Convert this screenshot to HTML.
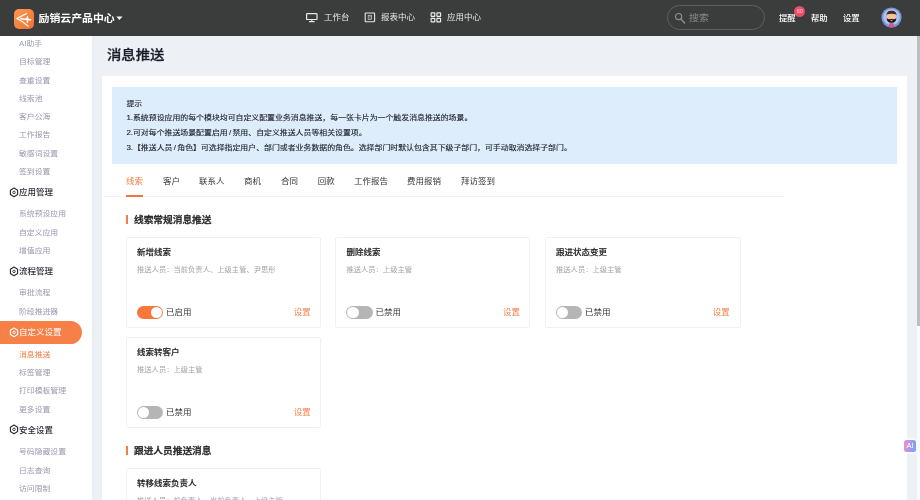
<!DOCTYPE html>
<html lang="zh-CN">
<head>
<meta charset="utf-8">
<title>消息推送</title>
<style>
*{box-sizing:border-box;margin:0;padding:0}
html,body{width:920px;height:500px;overflow:hidden;background:#edf0f5;
  font-family:"Liberation Sans","Noto Sans CJK SC",sans-serif;color:#333;}
body{position:relative;will-change:transform}
.abs{position:absolute;white-space:nowrap}
.abs,.si,.sg,.ct,.cs,.tt,.st,#search span{transform:scaleY(.93)}
/* header */
#hd{position:absolute;left:0;top:0;width:920px;height:35.6px;background:#3b3c3c}
#logo{position:absolute;left:14px;top:9.1px;width:20px;height:20.4px;border-radius:5px;
  background:linear-gradient(135deg,#fb9a52,#f26f33)}
#brand{left:38.5px;top:9px;font-size:10.9px;line-height:18px;font-weight:700;color:#fff;letter-spacing:0}
.nav{color:#e9e9e9;font-size:8.5px;line-height:12px;top:11px}
.hicon{position:absolute}
#search{position:absolute;left:667px;top:5px;width:98px;height:25px;border:1px solid #606060;border-radius:13px}
#search span{position:absolute;left:21px;top:5px;font-size:10px;line-height:14px;color:#8a8a8a}
.hr{color:#fff;font-size:8.4px;line-height:12px;top:11.5px;font-weight:500}
#badge{position:absolute;left:794.3px;top:5.6px;width:11px;height:11px;border-radius:6px;background:#ee4d69;
  color:#fcd3da;font-size:5.5px;line-height:11px;text-align:center}
#avatar{position:absolute;left:881px;top:7px}
/* sidebar */
#sb{position:absolute;left:0;top:36px;width:92px;height:464px;background:#fff;box-shadow:1px 0 4px rgba(0,0,40,.03)}
.si{position:absolute;left:19px;font-size:7.85px;line-height:12px;color:#9899b0;white-space:nowrap}
.sg{position:absolute;left:19px;font-size:8.5px;line-height:14px;color:#2b2b3a;font-weight:500;white-space:nowrap}
.gi{position:absolute;left:9px}
#pill{position:absolute;left:0;top:284.5px;width:82px;height:23.6px;border-radius:0 12px 12px 0;background:#f78049}
/* main */
#title{left:107px;top:44.2px;transform:scaleY(.89);font-size:14.35px;line-height:22px;font-weight:500;color:#1c1c2b;-webkit-text-stroke:0.3px #1c1c2b}
#card{position:absolute;left:102px;top:75.6px;width:805px;height:430px;background:#fff}
#tip{position:absolute;left:112px;top:86.5px;width:785.2px;height:77px;background:#deedfb}
.tl{left:126.4px;font-size:7.9px;line-height:12px;color:#1a1a28;-webkit-text-stroke:0.12px #1a1a28}
.sl{font-style:normal;padding:0 1.3px}
.tab{font-size:8.5px;line-height:12px;color:#333;top:174.6px}
#tabline{position:absolute;left:104px;top:196.3px;width:680px;height:1.2px;background:#f2f3f6}
#tabact{position:absolute;left:126px;top:194.8px;width:17px;height:2.1px;background:#ee7440}
.sec{font-size:9.7px;line-height:14px;font-weight:500;color:#222;left:134px;-webkit-text-stroke:0.32px #222}
.bar{position:absolute;left:126.2px;width:2.1px;height:9.5px;background:#f57c48}
.cd{position:absolute;width:195px;height:90.6px;border:1px solid #f1f1f4;border-radius:2px;background:#fff}
.ct{position:absolute;left:10px;top:8.1px;font-size:8.5px;line-height:12px;font-weight:500;color:#222;white-space:nowrap;-webkit-text-stroke:0.15px #222}
.cs{position:absolute;left:10px;top:26.6px;font-size:7.3px;line-height:10px;color:#a2a2a9;white-space:nowrap}
.c3 .st{right:10.3px}
.tg{position:absolute;left:10px;top:68.1px;width:26.2px;height:13.4px;border-radius:7px;background:#b5b5b5}
.tg i{position:absolute;left:1.1px;top:1.1px;width:11.2px;height:11.2px;border-radius:50%;background:#fff}
.tg.on{background:#f8773d}
.tg.on i{left:13.9px}
.tt{position:absolute;left:39px;top:68px;font-size:8.5px;line-height:12px;color:#333;white-space:nowrap}
.st{position:absolute;right:9.3px;top:68px;font-size:8.5px;line-height:12px;color:#f7824c;white-space:nowrap}
#sbar{position:absolute;left:917.1px;top:35.6px;width:3.4px;height:290.4px;background:#bebebe}
#strk{position:absolute;left:917.1px;top:326px;width:3.4px;height:174px;background:#fafafa}
#ai{position:absolute;left:904px;top:440px;width:12px;height:12px;border-radius:2.5px;
  background:linear-gradient(100deg,#f48fc8,#8f9cf5 70%,#6fa8f5);color:#fff;font-size:7.5px;line-height:12px;text-align:center;font-weight:400;box-shadow:0 0 3px 1.5px rgba(255,255,255,.85)}
</style>
</head>
<body>
<!-- main area -->
<div id="title" class="abs">消息推送</div>
<div id="card"></div>
<div id="tip"></div>
<div class="abs tl" style="top:97.8px">提示</div>
<div class="abs tl" style="top:112.4px">1.系统预设应用的每个模块均可自定义配置业务消息推送，每一张卡片为一个触发消息推送的场景。</div>
<div class="abs tl" style="top:127.2px">2.可对每个推送场景配置启用<i class="sl">/</i>禁用、自定义推送人员等相关设置项。</div>
<div class="abs tl" style="top:141.9px">3.【推送人员<i class="sl">/</i>角色】可选择指定用户、部门或者业务数据的角色。选择部门时默认包含其下级子部门，可手动取消选择子部门。</div>

<div class="abs tab" style="left:126px;color:#f8773d">线索</div>
<div class="abs tab" style="left:163px">客户</div>
<div class="abs tab" style="left:199px">联系人</div>
<div class="abs tab" style="left:244px">商机</div>
<div class="abs tab" style="left:281px">合同</div>
<div class="abs tab" style="left:317.8px">回款</div>
<div class="abs tab" style="left:354px">工作报告</div>
<div class="abs tab" style="left:407px">费用报销</div>
<div class="abs tab" style="left:461px">拜访签到</div>
<div id="tabline"></div>
<div id="tabact"></div>

<div class="bar" style="top:214.5px"></div>
<div class="abs sec" style="top:213.2px">线索常规消息推送</div>

<div class="cd" style="left:126px;top:237px">
  <div class="ct">新增线索</div>
  <div class="cs">推送人员：当前负责人、上级主管、尹思彤</div>
  <div class="tg on"><i></i></div><div class="tt">已启用</div><div class="st">设置</div>
</div>
<div class="cd" style="left:335.4px;top:237px">
  <div class="ct">删除线索</div>
  <div class="cs">推送人员：上级主管</div>
  <div class="tg"><i></i></div><div class="tt">已禁用</div><div class="st">设置</div>
</div>
<div class="cd c3" style="left:545px;top:237px;width:196px">
  <div class="ct">跟进状态变更</div>
  <div class="cs">推送人员：上级主管</div>
  <div class="tg"><i></i></div><div class="tt">已禁用</div><div class="st">设置</div>
</div>
<div class="cd" style="left:126px;top:337px">
  <div class="ct">线索转客户</div>
  <div class="cs">推送人员：上级主管</div>
  <div class="tg"><i></i></div><div class="tt">已禁用</div><div class="st">设置</div>
</div>

<div class="bar" style="top:445.8px"></div>
<div class="abs sec" style="top:444.4px">跟进人员推送消息</div>
<div class="cd" style="left:126px;top:468px">
  <div class="ct">转移线索负责人</div>
  <div class="cs">推送人员：前负责人、当前负责人、上级主管</div>
</div>

<div id="sbar"></div><div id="strk"></div>
<div id="ai">AI</div>

<!-- sidebar -->
<div id="sb">
  <div class="si" style="top:2.2px">AI助手</div>
  <div class="si" style="top:20.45px">目标管理</div>
  <div class="si" style="top:38.7px">查重设置</div>
  <div class="si" style="top:56.95px">线索池</div>
  <div class="si" style="top:75.2px">客户公海</div>
  <div class="si" style="top:93.45px">工作报告</div>
  <div class="si" style="top:111.7px">敏感词设置</div>
  <div class="si" style="top:129.95px">签到设置</div>
  <svg class="gi" style="top:150.7px" width="10" height="11" viewBox="0 0 10 11"><path d="M5 1.100 L8.600 3.200 V7.600 L5 9.700 L1.400 7.600 V3.200 Z" fill="none" stroke="#2b2b3a" stroke-width="1.150" stroke-linejoin="round"/><circle cx="5" cy="5.400" r="1.250" fill="none" stroke="#2b2b3a" stroke-width="0.900"/></svg>
  <div class="sg" style="top:149.1px">应用管理</div>
  <div class="si" style="top:172.2px">系统预设应用</div>
  <div class="si" style="top:190.6px">自定义应用</div>
  <div class="si" style="top:208.8px">增值应用</div>
  <svg class="gi" style="top:230.0px" width="10" height="11" viewBox="0 0 10 11"><path d="M5 1.100 L8.600 3.200 V7.600 L5 9.700 L1.400 7.600 V3.200 Z" fill="none" stroke="#2b2b3a" stroke-width="1.150" stroke-linejoin="round"/><circle cx="5" cy="5.400" r="1.250" fill="none" stroke="#2b2b3a" stroke-width="0.900"/></svg>
  <div class="sg" style="top:228.4px">流程管理</div>
  <div class="si" style="top:251.4px">审批流程</div>
  <div class="si" style="top:270px">阶段推进器</div>
  <div id="pill"></div>
  <svg class="gi" style="top:291.0px" width="10" height="11" viewBox="0 0 10 11"><path d="M5 1.100 L8.600 3.200 V7.600 L5 9.700 L1.400 7.600 V3.200 Z" fill="none" stroke="#fff" stroke-width="1.150" stroke-linejoin="round"/><circle cx="5" cy="5.400" r="1.250" fill="none" stroke="#fff" stroke-width="0.900"/></svg>
  <div class="sg" style="top:289.4px;color:#fff;font-weight:400">自定义设置</div>
  <div class="si" style="top:312.8px;color:#f8773d">消息推送</div>
  <div class="si" style="top:331px">标签管理</div>
  <div class="si" style="top:349.3px">打印模板管理</div>
  <div class="si" style="top:367.5px">更多设置</div>
  <svg class="gi" style="top:388.4px" width="10" height="11" viewBox="0 0 10 11"><path d="M5 1.100 L8.600 3.200 V7.600 L5 9.700 L1.400 7.600 V3.200 Z" fill="none" stroke="#2b2b3a" stroke-width="1.150" stroke-linejoin="round"/><circle cx="5" cy="5.400" r="1.250" fill="none" stroke="#2b2b3a" stroke-width="0.900"/></svg>
  <div class="sg" style="top:386.8px">安全设置</div>
  <div class="si" style="top:410.3px">号码隐藏设置</div>
  <div class="si" style="top:428.5px">日志查询</div>
  <div class="si" style="top:446.8px">访问限制</div>
</div>

<!-- header -->
<div id="hd">
  <div id="logo"><svg width="20" height="20" viewBox="0 0 20 20" style="display:block"><path d="M12.4 4.6 L2.900 9.500 Q8.500 12 14.200 17.200" fill="none" stroke="#fff" stroke-width="1.250" stroke-linecap="round" stroke-linejoin="round"/><path d="M6.800 9.700 L16.600 10.700 M13.400 7.700 L13.400 13.300" fill="none" stroke="#fff" stroke-width="1.600" stroke-linecap="round"/></svg></div>
  <svg class="hicon" style="left:116px;top:16px" width="7" height="5" viewBox="0 0 7 5"><path d="M0.3 0.5 H6.5 L3.4 4.1 Z" fill="#fff"/></svg>
  <div id="brand" class="abs">励销云产品中心</div>
  <svg class="hicon" style="left:306px;top:13px" width="12" height="10" viewBox="0 0 12 10"><rect x="0.6" y="0.6" width="10.4" height="5.9" rx="0.6" fill="none" stroke="#e8e8e8" stroke-width="1.2"/><path d="M5.8 6.5 V8.4 M3 8.6 H8.6" stroke="#e8e8e8" stroke-width="1.1" fill="none"/></svg>
  <svg class="hicon" style="left:364px;top:12px" width="12" height="11" viewBox="0 0 12 11"><rect x="1.2" y="1" width="9.4" height="8.8" rx="0.6" fill="none" stroke="#e8e8e8" stroke-width="1.1"/><rect x="4.2" y="3.3" width="3.2" height="4.2" fill="none" stroke="#d0d0d0" stroke-width="0.7"/><path d="M5 4.6 H6.8 M5 6 H6.8" stroke="#d0d0d0" stroke-width="0.5"/></svg>
  <svg class="hicon" style="left:430px;top:12px" width="12" height="11" viewBox="0 0 12 11"><g fill="none" stroke="#ececec" stroke-width="1.15"><rect x="1.1" y="0.9" width="3.7" height="3.5" rx="0.4"/><rect x="6.9" y="0.9" width="3.7" height="3.5" rx="0.4"/><rect x="1.1" y="6.3" width="3.7" height="3.5" rx="0.4"/><rect x="6.9" y="6.3" width="3.7" height="3.5" rx="0.4"/></g></svg>
  <div class="abs nav" style="left:324px">工作台</div>
  <div class="abs nav" style="left:381px">报表中心</div>
  <div class="abs nav" style="left:447px">应用中心</div>
  <div id="search"><svg style="position:absolute;left:6px;top:6px" width="13" height="13" viewBox="0 0 13 13"><circle cx="4.6" cy="4.6" r="3.1" fill="none" stroke="#8e8e8e" stroke-width="1.2"/><path d="M6.9 7 L10.6 11" stroke="#8e8e8e" stroke-width="1.4" stroke-linecap="round"/></svg><span>搜索</span></div>
  <div class="abs hr" style="left:779px">提醒</div>
  <div id="badge">60</div>
  <div class="abs hr" style="left:811px">帮助</div>
  <div class="abs hr" style="left:843px">设置</div>
  <svg id="avatar" width="21" height="21" viewBox="0 0 21 21"><defs><clipPath id="avc"><circle cx="10.5" cy="10.5" r="10"/></clipPath></defs><circle cx="10.5" cy="10.5" r="10.1" fill="#7b93dc"/><circle cx="10.5" cy="10.2" r="8.3" fill="#a9c6ef"/><g clip-path="url(#avc)"><path d="M7.3 21 Q7.3 15.8 10.5 15.8 Q13.7 15.8 13.7 21 Z" fill="#cf5a9c"/><rect x="5.7" y="4.6" width="9.6" height="10.6" rx="3.6" fill="#f2c29c"/><path d="M5.5 8.8 Q5.200 3.6 10.5 3.800 Q15.800 3.600 15.500 8.800 L14.600 7.300 Q10.500 6.200 6.400 7.300 Z" fill="#4b2a22"/><path d="M5.700 10.500 Q5.500 15.800 10.500 15.800 Q15.500 15.800 15.300 10.500 Q14.500 12.600 12.300 12.300 Q10.500 11.600 8.700 12.300 Q6.500 12.600 5.700 10.500 Z" fill="#1e1616"/><ellipse cx="10.500" cy="13.600" rx="1.200" ry="0.600" fill="#e9a8a0"/></g></svg>
</div>
</body>
</html>
